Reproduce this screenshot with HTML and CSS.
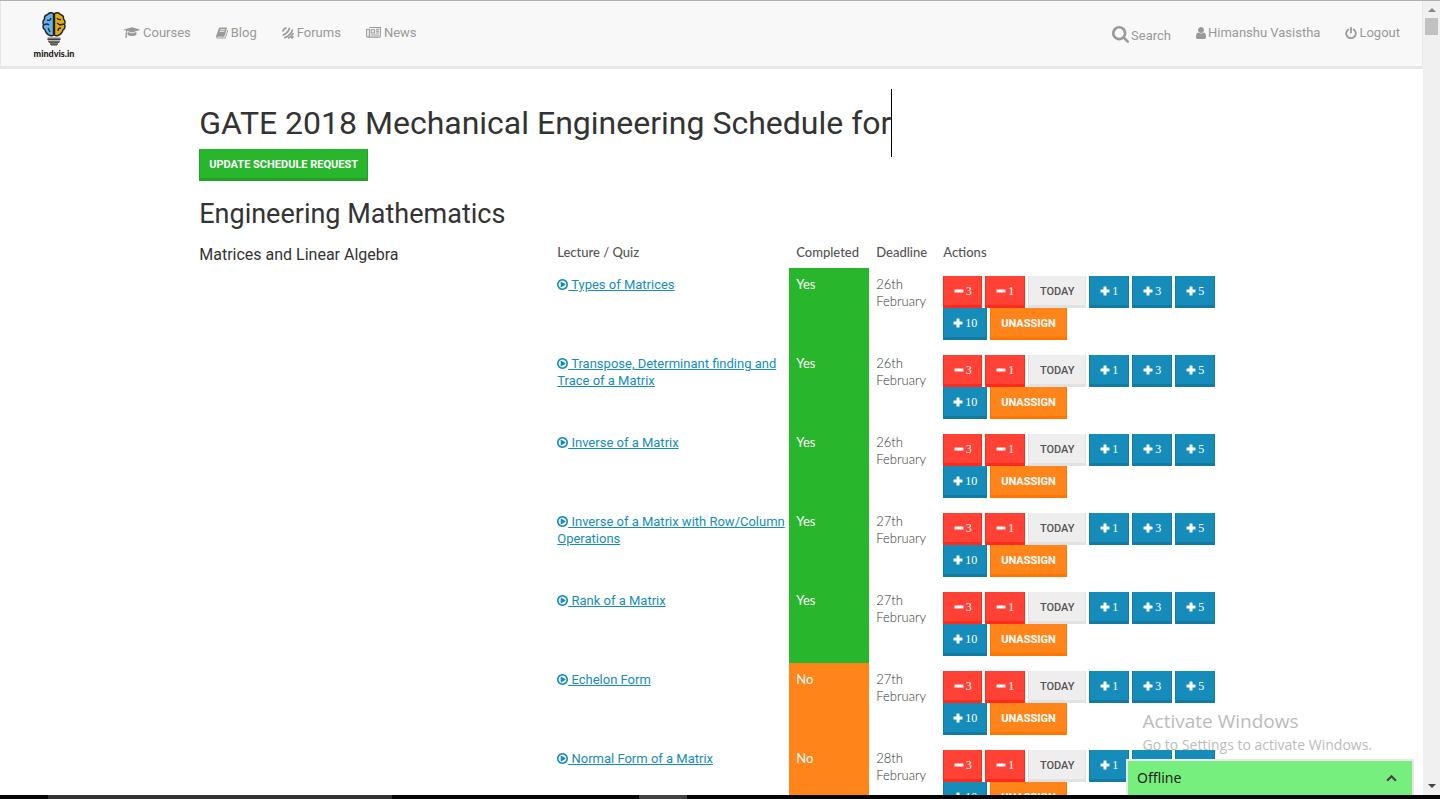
FILE: index.html
```html
<!DOCTYPE html>
<html lang="en">
<head>
<meta charset="utf-8">
<meta name="viewport" content="width=device-width, initial-scale=1">
<title>GATE 2018 Mechanical Engineering Schedule</title>
<link rel="stylesheet" href="styles.css">
</head>
<body>
<svg class="sprite" aria-hidden="true">
  <symbol id="cap" viewBox="0 128 2304 1536"><path d="M1774 836l18 316q4 69-82 128t-235 93.500-323 34.500-323-34.500-235-93.500-82-128l18-316 574 181q22 7 48 7t48-7zm530-324q0 23-22 31l-1120 352q-4 1-10 1t-10-1l-652-206q-43 34-71 111.500t-34 178.500q63 36 63 109 0 69-58 107l58 433q2 14-8 25-9 11-24 11h-192q-15 0-24-11-10-11-8-25l58-433q-58-38-58-107 0-73 65-111 11-207 98-330l-333-104q-22-8-22-31t22-31l1120-352q4-1 10-1t10 1l1120 352q22 8 22 31z"/></symbol>
  <symbol id="book" viewBox="0 128 1664 1536"><path d="M1639 478q40 57 18 129l-275 906q-19 64-76.500 107.500t-122.500 43.500h-923q-77 0-148.500-53.500t-99.500-131.500q-24-67-2-127 0-4 3-27t4-37q1-8-3-21.500t-3-19.500q2-11 8-21t16.500-23.500 16.500-23.500q23-38 45-91.500t30-91.500q3-10 .5-30t-.5-28q3-11 17-28t17-23q21-36 42-92t25-90q1-9-2.500-32t.5-28q4-13 22-30.500t22-22.500q19-26 42.500-84.500t27.500-96.500q1-8-3-25.500t-2-26.500q2-8 9-18t18-23 17-21q8-12 16.500-30.500t15-35 16-36 19.500-32 26.500-23.500 36-11.500 47.500 5.500l-1 3q38-9 51-9h761q74 0 114 56t18 130l-274 906q-36 119-71.500 153.500t-128.500 34.500h-869q-27 0-38 15-11 16-1 43 24 70 144 70h923q29 0 56-15.500t35-41.500l300-987q7-22 5-57 38 15 59 43zm-1064 2q-4 13 2 22.500t20 9.500h608q13 0 25.500-9.500t16.500-22.500l21-64q4-13-2-22.500t-20-9.500h-608q-13 0-25.500 9.500t-16.500 22.500zm-83 256q-4 13 2 22.500t20 9.500h608q13 0 25.500-9.500t16.500-22.500l21-64q4-13-2-22.500t-20-9.500h-608q-13 0-25.500 9.500t-16.500 22.500z"/></symbol>
  <symbol id="forum" viewBox="0 0 12 12"><path d="M.8 4.600C1.200 2.600 2.600 1.200 4.600.8M.6 8.200C3.600 7.200 6.800 4 7.600.8M2.200 11C6 9.600 9.600 6 10.600 2.600M6 11.200C8.400 10.200 10.400 8.200 11.300 6M9.200 11.300Q10.800 10.600 11.400 9.200" fill="none" stroke="currentColor" stroke-width="1.600"/></symbol>
  <symbol id="news" viewBox="0 0 16 12"><path d="M3.500.5h12v9.200q0 1.300-1.300 1.300H1.800Q.5 11 .5 9.700V2.500h3M3.500 2v7.500Q3.500 11 2 11M5.500 3h3.500v3.500H5.500zM10.500 2.500h3.500M10.500 4.500h3.500M10.500 6.500h3.500M5 8.700h9" fill="none" stroke="currentColor" stroke-width="1.200"/></symbol>
  <symbol id="search" viewBox="64 128 1664 1664"><path d="M1216 832q0-185-131.500-316.500t-316.500-131.500-316.500 131.500-131.500 316.500 131.500 316.500 316.500 131.500 316.500-131.500 131.500-316.500zm512 832q0 52-38 90t-90 38q-54 0-90-38l-343-342q-179 124-399 124-143 0-273.500-55.500t-225-150-150-225-55.500-273.500 55.500-273.500 150-225 225-150 273.500-55.500 273.500 55.500 225 150 150 225 55.500 273.500q0 220-124 399l343 343q37 37 37 90z"/></symbol>
  <symbol id="user" viewBox="256 128 1280 1536"><path d="M1536 1399q0 109-62.500 187t-150.500 78h-854q-88 0-150.500-78t-62.500-187q0-85 8.500-160.500t31.500-152 58.500-131 94-89 134.500-34.500q131 128 313 128t313-128q76 0 134.500 34.500t94 89 58.500 131 31.500 152 8.500 160.500zm-256-887q0 159-112.500 271.500t-271.500 112.500-271.500-112.500-112.500-271.500 112.500-271.500 271.500-112.500 271.500 112.500 112.500 271.500z"/></symbol>
  <symbol id="power" viewBox="0 0 12 12"><path d="M3.300 2.400a4.800 4.800 0 1 0 5.400 0M6 .8v4.800" fill="none" stroke="currentColor" stroke-width="1.800" stroke-linecap="round"/></symbol>
  <symbol id="play" viewBox="0 128 1536 1536"><path d="M1184 896q0 37-32 55l-544 320q-15 9-32 9-16 0-32-8-32-19-32-56v-640q0-37 32-56 33-18 64 1l544 320q32 18 32 55zm128 0q0-148-73-273t-198-198-273-73-273 73-198 198-73 273 73 273 198 198 273 73 273-73 198-198 73-273zm224 0q0 209-103 385.500t-279.500 279.500-385.500 103-385.500-103-279.500-279.500-103-385.500 103-385.500 279.500-279.500 385.500-103 385.500 103 279.500 279.500 103 385.500z"/></symbol>
  <symbol id="plus" viewBox="0 0 10 10"><path d="M4 .5h2q.5 0 .5.500v2.500H9q.5 0 .5.500v2q0 .5-.5.500H6.500V9q0 .5-.5.500H4q-.5 0-.5-.5V6.500H1Q.5 6.500.5 6V4q0-.5.5-.5h2.500V1q0-.5.5-.5z"/></symbol>
  <symbol id="minus" viewBox="0 0 10 10"><rect x=".5" y="3.500" width="9" height="3" rx=".6"/></symbol>
</svg>
<div class="screen">
  <div class="browser">
    <div class="page">
      <header class="navbar">
        <a class="brand" href="#" aria-label="mindvis.in">
          <svg class="bulb" viewBox="0 0 24 34" aria-hidden="true">
            <path d="M11.500 1.500Q8-.5 5.500 2.500 2 3.500 2.500 7 0 9.500 1.500 12.500 0 16 3 18q1 4 5 5.500 2.500.8 3.500-.5z" fill="#63b3ee" stroke="#222" stroke-width="1.400"/>
            <path d="M12.500 1.500Q16-.5 18.500 2.500 22 3.500 21.500 7 24 9.500 22.500 12.500 24 16 21 18q-1 4-5 5.500-2.500.8-3.500-.5z" fill="#e2ad10" stroke="#222" stroke-width="1.400"/>
            <path d="M12 1.500v22M5 8q3 1.500 4-2M2 13q3-2 5 0M6 16l2 4M15 6q1 2 4 1.500M15 11l3 2 4-1M16 19q0-3 3-3" fill="none" stroke="#222" stroke-width="1.300"/>
            <path d="M5.500 26.500h13M6 29.300h12M8 32h8" stroke="#777" stroke-width="1.800"/><path d="M5.500 27.500h13M7 30.400h10M9 33h6" stroke="#222" stroke-width=".8"/>
          </svg>
          <span class="brand-name">mindvis.in</span>
        </a>
        <nav class="links">
          <a href="#"><svg class="i-cap"><use href="#cap"/></svg>Courses</a>
          <a href="#"><svg class="i-std"><use href="#book"/></svg>Blog</a>
          <a href="#"><svg class="i-std"><use href="#forum"/></svg>Forums</a>
          <a href="#"><svg class="i-news"><use href="#news"/></svg>News</a>
        </nav>
        <nav class="links account">
          <a href="#"><svg class="i-search"><use href="#search"/></svg><span class="search-label">Search</span></a>
          <a href="#"><svg class="i-user"><use href="#user"/></svg>Himanshu Vasistha</a>
          <a href="#"><svg class="i-std"><use href="#power"/></svg>Logout</a>
        </nav>
      </header>
      <main class="content">
        <h1>GATE 2018 Mechanical Engineering Schedule for<span class="caret"></span></h1>
        <button class="btn green">Update schedule request</button>
        <h2>Engineering Mathematics</h2>
        <section class="subject">
          <h3>Matrices and Linear Algebra</h3>
          <table class="schedule">
            <thead><tr><th class="lecture">Lecture / Quiz</th><th class="done">Completed</th><th class="deadline">Deadline</th><th>Actions</th></tr></thead>
            <tbody>
              <tr><td class="title"><a href="#"><svg><use href="#play"/></svg> Types of Matrices</a></td><td class="yes">Yes</td><td class="date">26th February</td><td><div class="actions"><button class="btn red"><svg><use href="#minus"/></svg>3</button><button class="btn red"><svg><use href="#minus"/></svg>1</button><button class="btn gray">Today</button><button class="btn blue"><svg><use href="#plus"/></svg>1</button><button class="btn blue"><svg><use href="#plus"/></svg>3</button><button class="btn blue"><svg><use href="#plus"/></svg>5</button><button class="btn blue"><svg><use href="#plus"/></svg>10</button><button class="btn orange">Unassign</button></div></td></tr>
              <tr><td class="title"><a href="#"><svg><use href="#play"/></svg> Transpose, Determinant finding and Trace of a Matrix</a></td><td class="yes">Yes</td><td class="date">26th February</td><td><div class="actions"><button class="btn red"><svg><use href="#minus"/></svg>3</button><button class="btn red"><svg><use href="#minus"/></svg>1</button><button class="btn gray">Today</button><button class="btn blue"><svg><use href="#plus"/></svg>1</button><button class="btn blue"><svg><use href="#plus"/></svg>3</button><button class="btn blue"><svg><use href="#plus"/></svg>5</button><button class="btn blue"><svg><use href="#plus"/></svg>10</button><button class="btn orange">Unassign</button></div></td></tr>
              <tr><td class="title"><a href="#"><svg><use href="#play"/></svg> Inverse of a Matrix</a></td><td class="yes">Yes</td><td class="date">26th February</td><td><div class="actions"><button class="btn red"><svg><use href="#minus"/></svg>3</button><button class="btn red"><svg><use href="#minus"/></svg>1</button><button class="btn gray">Today</button><button class="btn blue"><svg><use href="#plus"/></svg>1</button><button class="btn blue"><svg><use href="#plus"/></svg>3</button><button class="btn blue"><svg><use href="#plus"/></svg>5</button><button class="btn blue"><svg><use href="#plus"/></svg>10</button><button class="btn orange">Unassign</button></div></td></tr>
              <tr><td class="title"><a href="#"><svg><use href="#play"/></svg> Inverse of a Matrix with Row/Column Operations</a></td><td class="yes">Yes</td><td class="date">27th February</td><td><div class="actions"><button class="btn red"><svg><use href="#minus"/></svg>3</button><button class="btn red"><svg><use href="#minus"/></svg>1</button><button class="btn gray">Today</button><button class="btn blue"><svg><use href="#plus"/></svg>1</button><button class="btn blue"><svg><use href="#plus"/></svg>3</button><button class="btn blue"><svg><use href="#plus"/></svg>5</button><button class="btn blue"><svg><use href="#plus"/></svg>10</button><button class="btn orange">Unassign</button></div></td></tr>
              <tr><td class="title"><a href="#"><svg><use href="#play"/></svg> Rank of a Matrix</a></td><td class="yes">Yes</td><td class="date">27th February</td><td><div class="actions"><button class="btn red"><svg><use href="#minus"/></svg>3</button><button class="btn red"><svg><use href="#minus"/></svg>1</button><button class="btn gray">Today</button><button class="btn blue"><svg><use href="#plus"/></svg>1</button><button class="btn blue"><svg><use href="#plus"/></svg>3</button><button class="btn blue"><svg><use href="#plus"/></svg>5</button><button class="btn blue"><svg><use href="#plus"/></svg>10</button><button class="btn orange">Unassign</button></div></td></tr>
              <tr><td class="title"><a href="#"><svg><use href="#play"/></svg> Echelon Form</a></td><td class="no">No</td><td class="date">27th February</td><td><div class="actions"><button class="btn red"><svg><use href="#minus"/></svg>3</button><button class="btn red"><svg><use href="#minus"/></svg>1</button><button class="btn gray">Today</button><button class="btn blue"><svg><use href="#plus"/></svg>1</button><button class="btn blue"><svg><use href="#plus"/></svg>3</button><button class="btn blue"><svg><use href="#plus"/></svg>5</button><button class="btn blue"><svg><use href="#plus"/></svg>10</button><button class="btn orange">Unassign</button></div></td></tr>
              <tr><td class="title"><a href="#"><svg><use href="#play"/></svg> Normal Form of a Matrix</a></td><td class="no">No</td><td class="date">28th February</td><td><div class="actions"><button class="btn red"><svg><use href="#minus"/></svg>3</button><button class="btn red"><svg><use href="#minus"/></svg>1</button><button class="btn gray">Today</button><button class="btn blue"><svg><use href="#plus"/></svg>1</button><button class="btn blue"><svg><use href="#plus"/></svg>3</button><button class="btn blue"><svg><use href="#plus"/></svg>5</button><button class="btn blue"><svg><use href="#plus"/></svg>10</button><button class="btn orange">Unassign</button></div></td></tr>
            </tbody>
          </table>
        </section>
      </main>
      <div class="watermark"><div class="watermark-title">Activate Windows</div><div>Go to Settings to activate Windows.</div></div>
      <button class="chat"><span>Offline</span><svg viewBox="0 0 10 8" aria-hidden="true"><path d="M1 6l4-4 4 4" fill="none" stroke="currentColor" stroke-width="2"/></svg></button>
    </div>
    <div class="scrollbar" aria-hidden="true">
      <svg viewBox="0 0 8 4"><path d="M0 4l4-4 4 4z"/></svg>
      <span class="thumb"></span>
      <svg class="down" viewBox="0 0 8 4"><path d="M0 0l4 4 4-4z"/></svg>
    </div>
  </div>
  <div class="taskbar"><span class="search-field"></span><span class="task"></span></div>
</div>
</body>
</html>
```
FILE: styles.css
```css
* { box-sizing: border-box; }
body { margin: 0; background: #fff; color: #333; font: 13px/17px Roboto, sans-serif; }
svg { fill: currentColor; flex: none; }
a { color: #158cba; }
button { font-family: inherit; cursor: pointer; }
.sprite { display: none; }

.screen { display: flex; flex-direction: column; height: 100vh; overflow: hidden; }
.browser { display: flex; flex: 1; min-height: 0; border-top: 1px solid #b0b0b0; }
.page { position: relative; flex: 1; min-width: 0; overflow: hidden; }

.navbar { display: flex; align-items: flex-start; padding: 0 22px 0 31px; height: 68px; background: #f8f8f8; border: 1px solid #e7e7e7; border-width: 0 1px 3px; }
.brand { display: flex; flex-direction: column; align-items: center; width: 44px; padding-top: 11px; text-decoration: none; }
.bulb { width: 24px; height: 34px; }
.brand-name { margin-top: 2px; color: #222; font: 900 9px/12px Lato, sans-serif; }
.links { display: flex; align-items: flex-start; gap: 25px; padding: 23px 0 0 48px; }
.links a { display: flex; align-items: center; gap: 3px; color: #999; text-decoration: none; }
.links.account { margin-left: auto; }
.account a { gap: 2px; }
.search-label { padding-top: 3px; }
.i-cap { width: 16px; height: 11px; }
.i-std { width: 12px; height: 12px; }
.i-news { width: 15px; height: 11px; }
.i-search { width: 17px; height: 17px; }
.i-user { width: 10px; height: 12px; }

.content { padding: 36px 14% 0; }
h1, h2, h3 { margin: 0; font-weight: 400; }
h1 { position: relative; font-size: 32px; line-height: 36px; white-space: nowrap; }
.caret { position: absolute; top: -16px; height: 68px; border-left: 1px solid #000; }
h2 { margin-top: 19px; font-size: 27px; line-height: 28px; }
.subject { display: grid; grid-template-columns: 351px 1fr; margin-top: 9px; }
h3 { padding-top: 9px; font-size: 16px; line-height: 18px; }

.schedule { width: 100%; border-collapse: collapse; table-layout: fixed; }
.schedule th, .schedule td { padding: 8px 7px 7px; text-align: left; vertical-align: top; }
.schedule td.title { padding-right: 0; }
.schedule th { padding: 7px; color: #555; font: 500 13px/17px Lato, sans-serif; }
.schedule .lecture { width: 239px; }
.schedule .done { width: 80px; }
.schedule .deadline { width: 67px; }
.schedule a svg { width: 11px; height: 11px; vertical-align: -1px; }
.schedule td.yes, .schedule td.no { color: #fff; font-family: Lato, sans-serif; }
.yes { background: #28b62c; }
.no { background: #ff851b; }
.schedule td.date { color: #333; font: 300 13px/17px Lato, sans-serif; }
.actions { display: flex; flex-wrap: wrap; column-gap: 3px; width: 276px; }

.btn { display: inline-flex; align-items: center; justify-content: center; gap: 2px; height: 32px; min-width: 40px; padding: 2px 10px 0; border: 0 solid; border-width: 0 1px 3px; color: #fff; font-size: 11px; line-height: 16px; font-weight: 700; text-transform: uppercase; }
.btn svg { width: 10px; height: 10px; }
.actions .btn.red, .actions .btn.blue { padding: 1px 9px 0; font: 12px/16px "Liberation Serif", serif; }
.btn.green { margin-top: 8px; padding: 2px 9px 0; background: #28b62c; border-color: #23a127; }
.red { background: #ff4136; border-color: #ff291c; }
.red:first-child { min-width: 39px; }
.blue { background: #158cba; border-color: #127ba3; }
.gray { min-width: 58px; background: #eee; border-color: #e2e2e2; color: #555; font-weight: 500; }
.orange { background: #ff851b; border-color: #ff7701; }

.watermark { position: absolute; right: 51px; bottom: 41px; color: #bbb; font: 14px/19px "Open Sans", sans-serif; white-space: nowrap; pointer-events: none; }
.watermark-title { font-size: 19px; line-height: 27px; }
.chat { position: absolute; right: 11px; bottom: 0; display: flex; align-items: center; justify-content: space-between; width: 284px; height: 34px; padding: 0 15px 0 9px; border: 0; background: #77ef7e; color: #222; font: 14px/20px "Noto Sans", sans-serif; box-shadow: 0 0 0 2px #e8e8e8; }
.chat svg { width: 11px; height: 9px; color: #444; }

.scrollbar { display: flex; flex-direction: column; align-items: center; gap: 6px; width: 17px; padding: 7px 0; background: #f0f0f0; color: #888; }
.scrollbar svg { width: 8px; height: 4px; }
.thumb { width: 13px; height: 17px; background: #c1c1c1; }
.scrollbar .down { margin-top: auto; color: #444; }
.taskbar { display: flex; height: 4px; padding-left: 48px; background: #050606; }
.search-field { width: 344px; margin-right: 247px; background: #323432; }
.task { width: 48px; background: #414341; }
```
